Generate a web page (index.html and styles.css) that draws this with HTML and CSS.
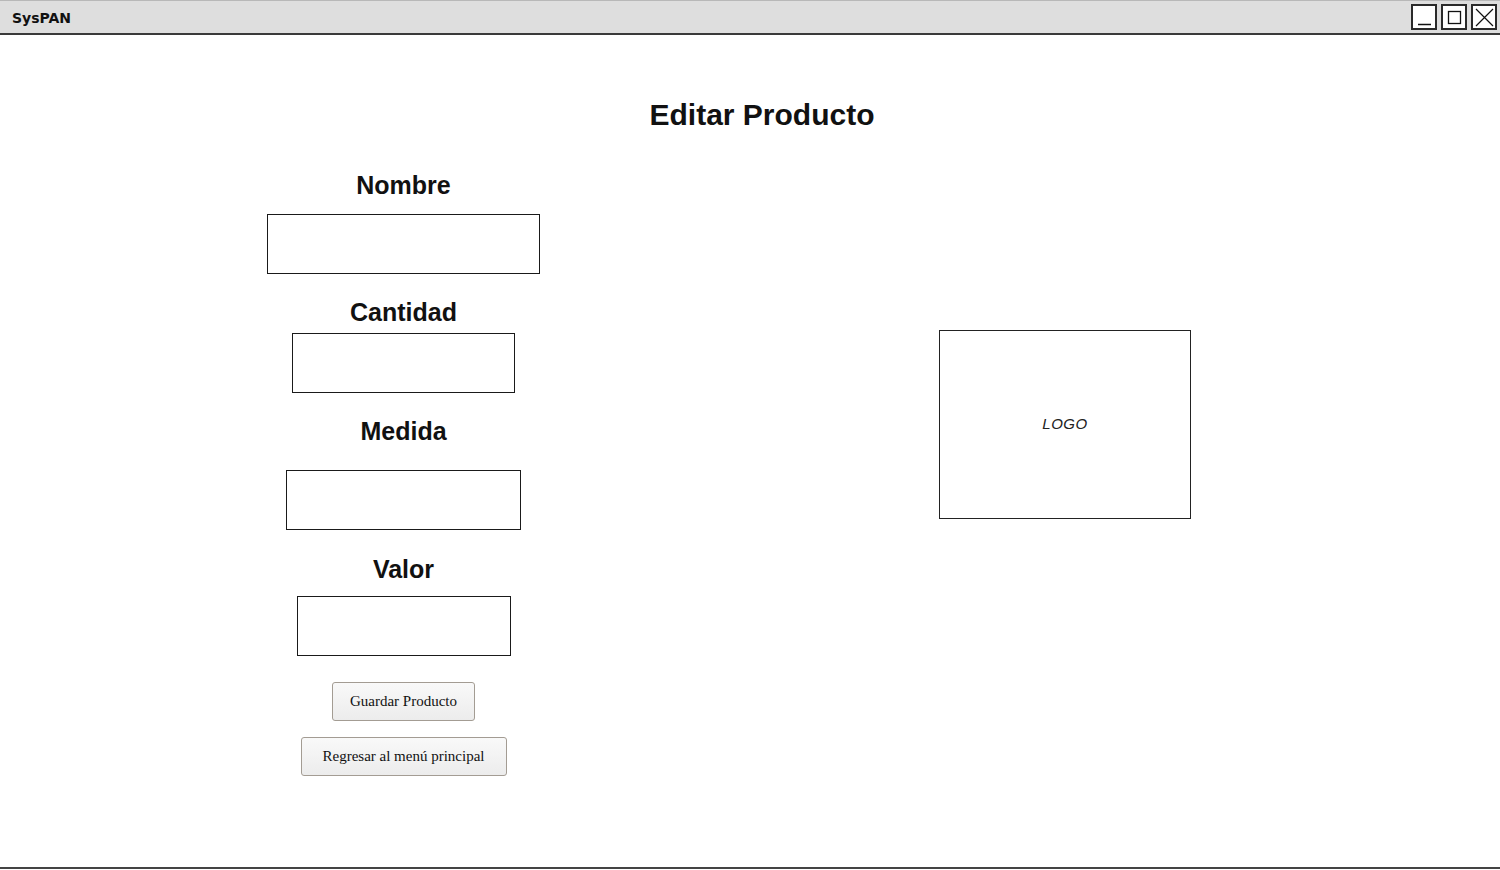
FILE: index.html
```html
<!DOCTYPE html>
<html lang="es">
<head>
<meta charset="utf-8">
<title>SysPAN</title>
<link rel="stylesheet" href="styles.css">
</head>
<body>
<div class="window">
  <header class="titlebar">
    <span class="app-name">SysPAN</span>
    <div class="controls">
      <span class="ctl"><svg width="21" height="21" viewBox="0 0 21 21"><line x1="4" y1="17.5" x2="17" y2="17.5" stroke="#111" stroke-width="1.5"/></svg></span>
      <span class="ctl"><svg width="21" height="21" viewBox="0 0 21 21"><rect x="4.5" y="4.5" width="12" height="12" fill="none" stroke="#111" stroke-width="1.3"/></svg></span>
      <span class="ctl"><svg width="21" height="21" viewBox="0 0 21 21"><path d="M2 2 L19 19 M19 2 L2 19" stroke="#111" stroke-width="1.2" fill="none"/></svg></span>
    </div>
  </header>
  <main class="main">
    <h1 class="page-title">Editar Producto</h1>
    <div class="content">
      <section class="form-col">
        <label class="field-label l-nombre">Nombre</label>
        <div class="input i-nombre"></div>
        <label class="field-label l-cantidad">Cantidad</label>
        <div class="input i-cantidad"></div>
        <label class="field-label l-medida">Medida</label>
        <div class="input i-medida"></div>
        <label class="field-label l-valor">Valor</label>
        <div class="input i-valor"></div>
        <button class="btn b-guardar">Guardar Producto</button>
        <button class="btn b-regresar">Regresar al menú principal</button>
      </section>
      <aside class="logo">LOGO</aside>
    </div>
  </main>
</div>
</body>
</html>
```
FILE: styles.css
```css
* { box-sizing: border-box; }
html, body { margin: 0; padding: 0; background: #fff; }
.window {
  width: 1500px;
  height: 870px;
  display: flex;
  flex-direction: column;
  overflow: hidden;
}
.titlebar {
  height: 35px;
  flex: none;
  background: #dedede;
  border-top: 1px solid #b8b8b8;
  border-bottom: 2px solid #3a3a3a;
  display: flex;
  align-items: center;
  justify-content: space-between;
  padding: 0 3px 0 12px;
}
.app-name {
  font-family: "Comic Sans MS", "DejaVu Sans", sans-serif;
  font-size: 14px;
  font-weight: 600;
  color: #111;
  margin-top: 2px;
}
.controls { display: flex; gap: 4px; }
.ctl {
  width: 26px;
  height: 26px;
  border: 2px solid #2a2a2a;
  background: #fff;
  display: flex;
  align-items: center;
  justify-content: center;
}
.main {
  flex: 1;
  border-bottom: 2px solid #444;
  display: flex;
  flex-direction: column;
  margin-bottom: 1px;
}
.page-title {
  margin: 62px 0 0 0;
  padding-left: 24px;
  text-align: center;
  font-family: "Liberation Sans", Arial, sans-serif;
  font-weight: bold;
  font-size: 30px;
  line-height: 36px;
  color: #111;
}
.content { display: flex; align-items: flex-start; }
.form-col {
  width: 807px;
  display: flex;
  flex-direction: column;
  align-items: center;
  padding-top: 38px;
}
.field-label {
  font-family: "Liberation Sans", Arial, sans-serif;
  font-weight: bold;
  font-size: 25px;
  line-height: 28px;
  color: #111;
}
.input { border: 1.5px solid #1a1a1a; background: #fff; height: 60px; }
.l-nombre { margin-bottom: 15px; }
.i-nombre { width: 273px; }
.l-cantidad { margin-top: 24px; margin-bottom: 7px; }
.i-cantidad { width: 223px; }
.l-medida { margin-top: 24px; margin-bottom: 25px; }
.i-medida { width: 235px; }
.l-valor { margin-top: 25px; margin-bottom: 13px; }
.i-valor { width: 214px; }
.btn {
  font-family: "Liberation Serif", "Times New Roman", serif;
  font-size: 15px;
  color: #111;
  height: 39px;
  border: 1px solid #a39c93;
  border-radius: 3px;
  background: linear-gradient(#f9f9f9, #ececec);
  padding: 0;
}
.b-guardar { width: 143px; margin-top: 26px; }
.b-regresar { width: 206px; margin-top: 16px; }
.logo {
  margin-left: 132px;
  margin-top: 197px;
  width: 252px;
  height: 189px;
  border: 1.5px solid #222;
  display: flex;
  align-items: center;
  justify-content: center;
  font-family: "Liberation Sans", Arial, sans-serif;
  font-style: italic;
  font-size: 15px;
  letter-spacing: 0.5px;
  color: #222;
  padding-bottom: 2px;
}
```
